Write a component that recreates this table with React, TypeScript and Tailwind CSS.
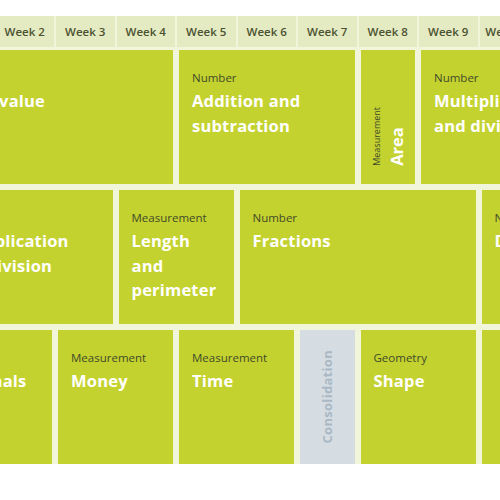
import React from "react";

type Block = {
  span: number;
  label?: string;
  title?: string;
  kind?: "topic" | "vertical" | "consolidation";
};

const spanClass: Record<number, string> = {
  1: "col-span-1",
  2: "col-span-2",
  3: "col-span-3",
  4: "col-span-4",
};

const weeks = Array.from({ length: 12 }, (_, i) => `Week ${i + 1}`);

const rows: Block[][] = [
  [
    { span: 4, label: "Number", title: "Place value" },
    { span: 3, label: "Number", title: "Addition and subtraction" },
    { span: 1, label: "Measurement", title: "Area", kind: "vertical" },
    { span: 4, label: "Number", title: "Multiplication and division" },
  ],
  [
    { span: 3, label: "Number", title: "Multiplication and division" },
    { span: 2, label: "Measurement", title: "Length and perimeter" },
    { span: 4, label: "Number", title: "Fractions" },
    { span: 3, label: "Number", title: "Decimals" },
  ],
  [
    { span: 2, label: "Number", title: "Decimals" },
    { span: 2, label: "Measurement", title: "Money" },
    { span: 2, label: "Measurement", title: "Time" },
    { span: 1, title: "Consolidation", kind: "consolidation" },
    { span: 2, label: "Geometry", title: "Shape" },
    { span: 3 },
  ],
];

const Cell = ({ block }: { block: Block }) => {
  if (block.kind === "consolidation") {
    return (
      <div className={`${spanClass[block.span]} flex items-center justify-center bg-[#d5dde3]`}>
        <span className="rotate-180 text-[13px] font-bold leading-none tracking-[0.3px] text-[#a9b8c4] [writing-mode:vertical-rl]">
          {block.title}
        </span>
      </div>
    );
  }

  if (block.kind === "vertical") {
    return (
      <div className={`${spanClass[block.span]} flex items-end bg-[#c4d22f] pb-[18px] pl-[10px]`}>
        <div className="rotate-180 [writing-mode:vertical-rl]">
          <div className="text-[9px] leading-[12px] text-[#3f4a2a]">{block.label}</div>
          <div className="mr-[2px] text-[16.5px] font-bold leading-[24.5px] text-white">{block.title}</div>
        </div>
      </div>
    );
  }

  return (
    <div className={`${spanClass[block.span]} bg-[#c4d22f] px-[13px] pt-[20px]`}>
      {block.label && <div className="text-[11.5px] leading-4 text-[#3f4a2a]">{block.label}</div>}
      {block.title && (
        <div className="mt-[3px] max-w-[140px] text-[16.5px] font-bold leading-[24.5px] tracking-[0.2px] text-white">
          {block.title}
        </div>
      )}
    </div>
  );
};

export default function App() {
  return (
    <div className="h-[500px] w-[500px] overflow-hidden bg-white pt-4 font-['Open_Sans',sans-serif]">
      <div className="bg-[#f1f5da] pb-0">
        {/* Week header */}
        <div className="ml-[-65px] grid h-[31px] w-max grid-cols-[repeat(12,58.5px)] gap-x-[2px]">
          {weeks.map((w) => (
            <div
              key={w}
              className="flex items-center justify-center bg-[#e4eac2] text-[11.5px] font-semibold text-[#4b5231]"
            >
              {w}
            </div>
          ))}
        </div>

        {/* Topic blocks */}
        <div className="ml-[-63px] mt-[3px] grid w-max auto-rows-[134px] grid-cols-[repeat(12,54.5px)] gap-[6px]">
          {rows.map((row, r) =>
            row.map((block, i) => <Cell key={`${r}-${i}`} block={block} />)
          )}
        </div>
      </div>
    </div>
  );
}
